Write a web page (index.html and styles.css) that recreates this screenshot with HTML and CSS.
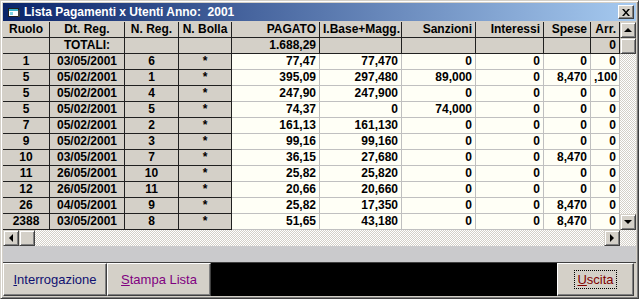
FILE: index.html
```html
<!DOCTYPE html>
<html>

<head>
    <link rel="stylesheet" href="styles.css">
</head>

<body>
    <div class="window">
        <div class="titlebar">
            <svg class="app-icon" width="16" height="16" viewBox="0 0 16 16">
                <rect x="2.5" y="4.5" width="10" height="8" fill="#ffffff" stroke="#202020" />
                <rect x="3" y="5" width="9" height="2" fill="#3ab0c8" />
                <rect x="4" y="8" width="3" height="3" fill="#7fd4e4" />
                <rect x="12" y="6" width="2" height="7" fill="#404040" />
            </svg>
            <span class="title">Lista Pagamenti x Utenti Anno:  2001</span>
            <span class="close">
                <svg width="8" height="7" viewBox="0 0 8 7">
                    <path d="M0 0h2l2 2.5 2-2.5h2l-3 3.5 3 3.5h-2l-2-2.5-2 2.5h-2l3-3.5z" fill="#000" />
                </svg>
            </span>
        </div>

        <div class="gridbox">
            <div class="grid-main">
                <div class="grid">
                    <!-- header -->
                    <div class="c fx">Ruolo</div>
                    <div class="c fx">Dt. Reg.</div>
                    <div class="c fx">N. Reg.</div>
                    <div class="c fx">N. Bolla</div>
                    <div class="c fx r">PAGATO</div>
                    <div class="c fx r">I.Base+Magg.</div>
                    <div class="c fx r">Sanzioni</div>
                    <div class="c fx r">Interessi</div>
                    <div class="c fx r">Spese</div>
                    <div class="c fx r">Arr.</div>
                    <!-- totali -->
                    <div class="c fx"></div>
                    <div class="c fx">TOTALI:</div>
                    <div class="c fx"></div>
                    <div class="c fx"></div>
                    <div class="c fx r">1.688,29</div>
                    <div class="c fx r"></div>
                    <div class="c fx r"></div>
                    <div class="c fx r"></div>
                    <div class="c fx r"></div>
                    <div class="c fx r">0</div>

                    <div class="c fx">1</div><div class="c fx">03/05/2001</div><div class="c fx">6</div><div class="c fx">*</div>
                    <div class="c">77,47</div><div class="c">77,470</div><div class="c">0</div><div class="c">0</div><div class="c">0</div><div class="c">0</div>

                    <div class="c fx">5</div><div class="c fx">05/02/2001</div><div class="c fx">1</div><div class="c fx">*</div>
                    <div class="c">395,09</div><div class="c">297,480</div><div class="c">89,000</div><div class="c">0</div><div class="c">8,470</div><div class="c">,100</div>

                    <div class="c fx">5</div><div class="c fx">05/02/2001</div><div class="c fx">4</div><div class="c fx">*</div>
                    <div class="c">247,90</div><div class="c">247,900</div><div class="c">0</div><div class="c">0</div><div class="c">0</div><div class="c">0</div>

                    <div class="c fx">5</div><div class="c fx">05/02/2001</div><div class="c fx">5</div><div class="c fx">*</div>
                    <div class="c">74,37</div><div class="c">0</div><div class="c">74,000</div><div class="c">0</div><div class="c">0</div><div class="c">0</div>

                    <div class="c fx">7</div><div class="c fx">05/02/2001</div><div class="c fx">2</div><div class="c fx">*</div>
                    <div class="c">161,13</div><div class="c">161,130</div><div class="c">0</div><div class="c">0</div><div class="c">0</div><div class="c">0</div>

                    <div class="c fx">9</div><div class="c fx">05/02/2001</div><div class="c fx">3</div><div class="c fx">*</div>
                    <div class="c">99,16</div><div class="c">99,160</div><div class="c">0</div><div class="c">0</div><div class="c">0</div><div class="c">0</div>

                    <div class="c fx">10</div><div class="c fx">03/05/2001</div><div class="c fx">7</div><div class="c fx">*</div>
                    <div class="c">36,15</div><div class="c">27,680</div><div class="c">0</div><div class="c">0</div><div class="c">8,470</div><div class="c">0</div>

                    <div class="c fx">11</div><div class="c fx">26/05/2001</div><div class="c fx">10</div><div class="c fx">*</div>
                    <div class="c">25,82</div><div class="c">25,820</div><div class="c">0</div><div class="c">0</div><div class="c">0</div><div class="c">0</div>

                    <div class="c fx">12</div><div class="c fx">26/05/2001</div><div class="c fx">11</div><div class="c fx">*</div>
                    <div class="c">20,66</div><div class="c">20,660</div><div class="c">0</div><div class="c">0</div><div class="c">0</div><div class="c">0</div>

                    <div class="c fx">26</div><div class="c fx">04/05/2001</div><div class="c fx">9</div><div class="c fx">*</div>
                    <div class="c">25,82</div><div class="c">17,350</div><div class="c">0</div><div class="c">0</div><div class="c">8,470</div><div class="c">0</div>

                    <div class="c fx">2388</div><div class="c fx">03/05/2001</div><div class="c fx">8</div><div class="c fx">*</div>
                    <div class="c">51,65</div><div class="c">43,180</div><div class="c">0</div><div class="c">0</div><div class="c">8,470</div><div class="c">0</div>
                </div>

                <div class="vscroll">
                    <div class="sbtn"><span class="arrow up"></span></div>
                    <div class="sbtn"></div>
                    <div class="track"></div>
                    <div class="sbtn"><span class="arrow down"></span></div>
                </div>
            </div>

            <div class="hscroll-row">
                <div class="hscroll">
                    <div class="sbtn"><span class="arrow left"></span></div>
                    <div class="sbtn"></div>
                    <div class="track"></div>
                    <div class="sbtn"><span class="arrow right"></span></div>
                </div>
                <div class="corner"></div>
            </div>
        </div>

        <div class="strip"></div>

        <div class="buttons">
            <div class="btn btn-query"><span><u>I</u>nterrogazione</span></div>
            <div class="btn btn-print"><span><u>S</u>tampa Lista</span></div>
            <div class="status"></div>
            <div class="btn btn-exit"><span class="focus"><u>U</u>scita</span></div>
        </div>
    </div>
</body>

</html>
```
FILE: styles.css
```css
html,
body {
    margin: 0;
    background: #d4d0c8;
    overflow: hidden;
}

.window {
    width: 639px;
    height: 299px;
    box-sizing: border-box;
    background: #d4d0c8;
    border: 1px solid;
    border-color: #d4d0c8 #404040 #404040 #d4d0c8;
    box-shadow: inset 1px 1px #ffffff, inset -1px -1px #808080;
    padding: 2px;
    font-family: "Liberation Sans", Arial, sans-serif;
}

.titlebar {
    height: 18px;
    margin-bottom: 1px;
    display: flex;
    align-items: center;
    background: linear-gradient(90deg, #0a246a, #a6caf0);
    color: #ffffff;
    font-weight: bold;
    font-size: 12px;
    padding-left: 3px;
}

.app-icon {
    margin-right: 2px;
}

.title {
    white-space: pre;
}

.close {
    margin-left: auto;
    margin-right: 2px;
    width: 16px;
    height: 14px;
    box-sizing: border-box;
    background: #d4d0c8;
    border: 1px solid;
    border-color: #ffffff #404040 #404040 #ffffff;
    box-shadow: inset -1px -1px #808080;
    display: flex;
    align-items: center;
    justify-content: center;
}

/* grid */

.gridbox {
    width: 633px;
}

.grid-main {
    display: flex;
    height: 208px;
}

.grid {
    width: 617px;
    display: grid;
    grid-template-columns: 47px 75px 54px 53px 88px 82px 74px 68px 47px 29px;
    grid-auto-rows: 16px;
    font-size: 12px;
    font-weight: bold;
    color: #000000;
}

.c {
    box-sizing: border-box;
    border-right: 1px solid #c0c0c0;
    border-bottom: 1px solid #c0c0c0;
    background: #fffff6;
    padding: 0 3px;
    line-height: 15px;
    text-align: right;
    white-space: nowrap;
    overflow: hidden;
}

.fx {
    background: #d4d0c8;
    border-color: #202020;
    text-align: center;
}

.fx.r {
    text-align: right;
}

.track {
    flex: 1;
    background-image: repeating-conic-gradient(#ffffff 0 25%, #d4d0c8 0 50%);
    background-size: 2px 2px;
}

.vscroll {
    width: 16px;
    display: flex;
    flex-direction: column;
}

.hscroll-row {
    display: flex;
    height: 16px;
}

.hscroll {
    width: 617px;
    display: flex;
}

.corner {
    flex: 1;
    background-image: repeating-conic-gradient(#ffffff 0 25%, #d4d0c8 0 50%);
    background-size: 2px 2px;
}

.sbtn {
    width: 16px;
    height: 16px;
    box-sizing: border-box;
    background: #d4d0c8;
    border: 1px solid;
    border-color: #d4d0c8 #404040 #404040 #d4d0c8;
    box-shadow: inset 1px 1px #ffffff, inset -1px -1px #808080;
    display: flex;
    align-items: center;
    justify-content: center;
}

.arrow {
    width: 0;
    height: 0;
    border: 4px solid transparent;
}

.arrow.up {
    border-top: 0;
    border-bottom-color: #000000;
}

.arrow.down {
    border-bottom: 0;
    border-top-color: #000000;
}

.arrow.left {
    border-left: 0;
    border-right-color: #000000;
}

.arrow.right {
    border-right: 0;
    border-left-color: #000000;
}

.strip {
    height: 16px;
    background: #cacacc;
    border-bottom: 1px solid #404040;
}

/* bottom buttons */

.buttons {
    display: flex;
    height: 33px;
    padding-right: 2px;
}

.btn {
    box-sizing: border-box;
    width: 104px;
    background: #d4d0c8;
    border: 1px solid;
    border-color: #ffffff #404040 #404040 #ffffff;
    box-shadow: inset -1px -1px #808080;
    display: flex;
    align-items: center;
    justify-content: center;
    font-size: 13px;
}

.btn-query {
    color: #101070;
}

.btn-print {
    color: #800080;
}

.btn-exit {
    width: 77px;
    color: #800000;
}

.status {
    flex: 1;
    background: #000000;
}

.focus {
    border: 1px dotted #000000;
    padding: 1px 2px;
}
```
